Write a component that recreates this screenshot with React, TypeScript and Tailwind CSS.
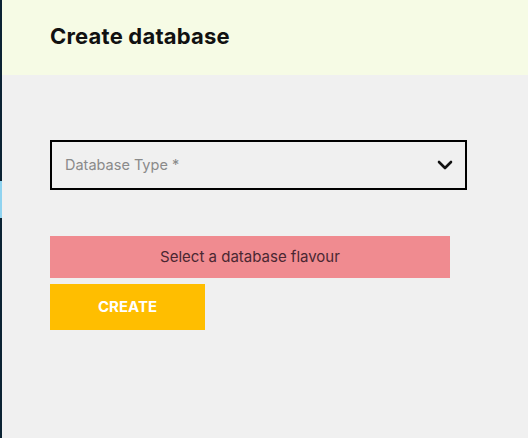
import React from "react";

export default function App() {
  return (
    <div
      className="flex h-[438px] w-[528px] overflow-hidden bg-[#f0f0f0]"
      style={{ fontFamily: "Inter, 'Open Sans', sans-serif" }}
    >
      <div className="flex w-[2px] shrink-0 flex-col bg-[#0b2333]">
        <div className="mt-[181px] h-[37px] bg-[#8fd3f0]" />
      </div>
      <div className="flex flex-1 flex-col">
        <div className="flex h-[75px] items-center bg-[#f6fbe5] pb-[2px] pl-[48px]">
          <h1 className="text-[22px] font-bold tracking-[0.2px] text-[#111]">Create database</h1>
        </div>
        <div className="flex flex-col pl-[48px] pt-[65px]">
          <div className="flex h-[50px] w-[417px] items-center justify-between border-2 border-black pl-[13px] pr-[12px]">
            <span className="text-[14.5px] text-[#8a8a8a]">Database Type *</span>
            <svg width="16" height="12" viewBox="0 0 16 12" fill="none">
              <path
                d="M2 3 L8 9 L14 3"
                stroke="#111"
                strokeWidth="2.6"
                strokeLinecap="round"
                strokeLinejoin="round"
              />
            </svg>
          </div>
          <div className="mt-[46px] flex h-[42px] w-[400px] items-center justify-center bg-[#f08b90] text-[15px] text-[#4a2732]">
            Select a database flavour
          </div>
          <button className="mt-[6px] flex h-[46px] w-[155px] items-center justify-center bg-[#ffbe00] text-[15px] font-bold text-white">
            CREATE
          </button>
        </div>
      </div>
    </div>
  );
}
